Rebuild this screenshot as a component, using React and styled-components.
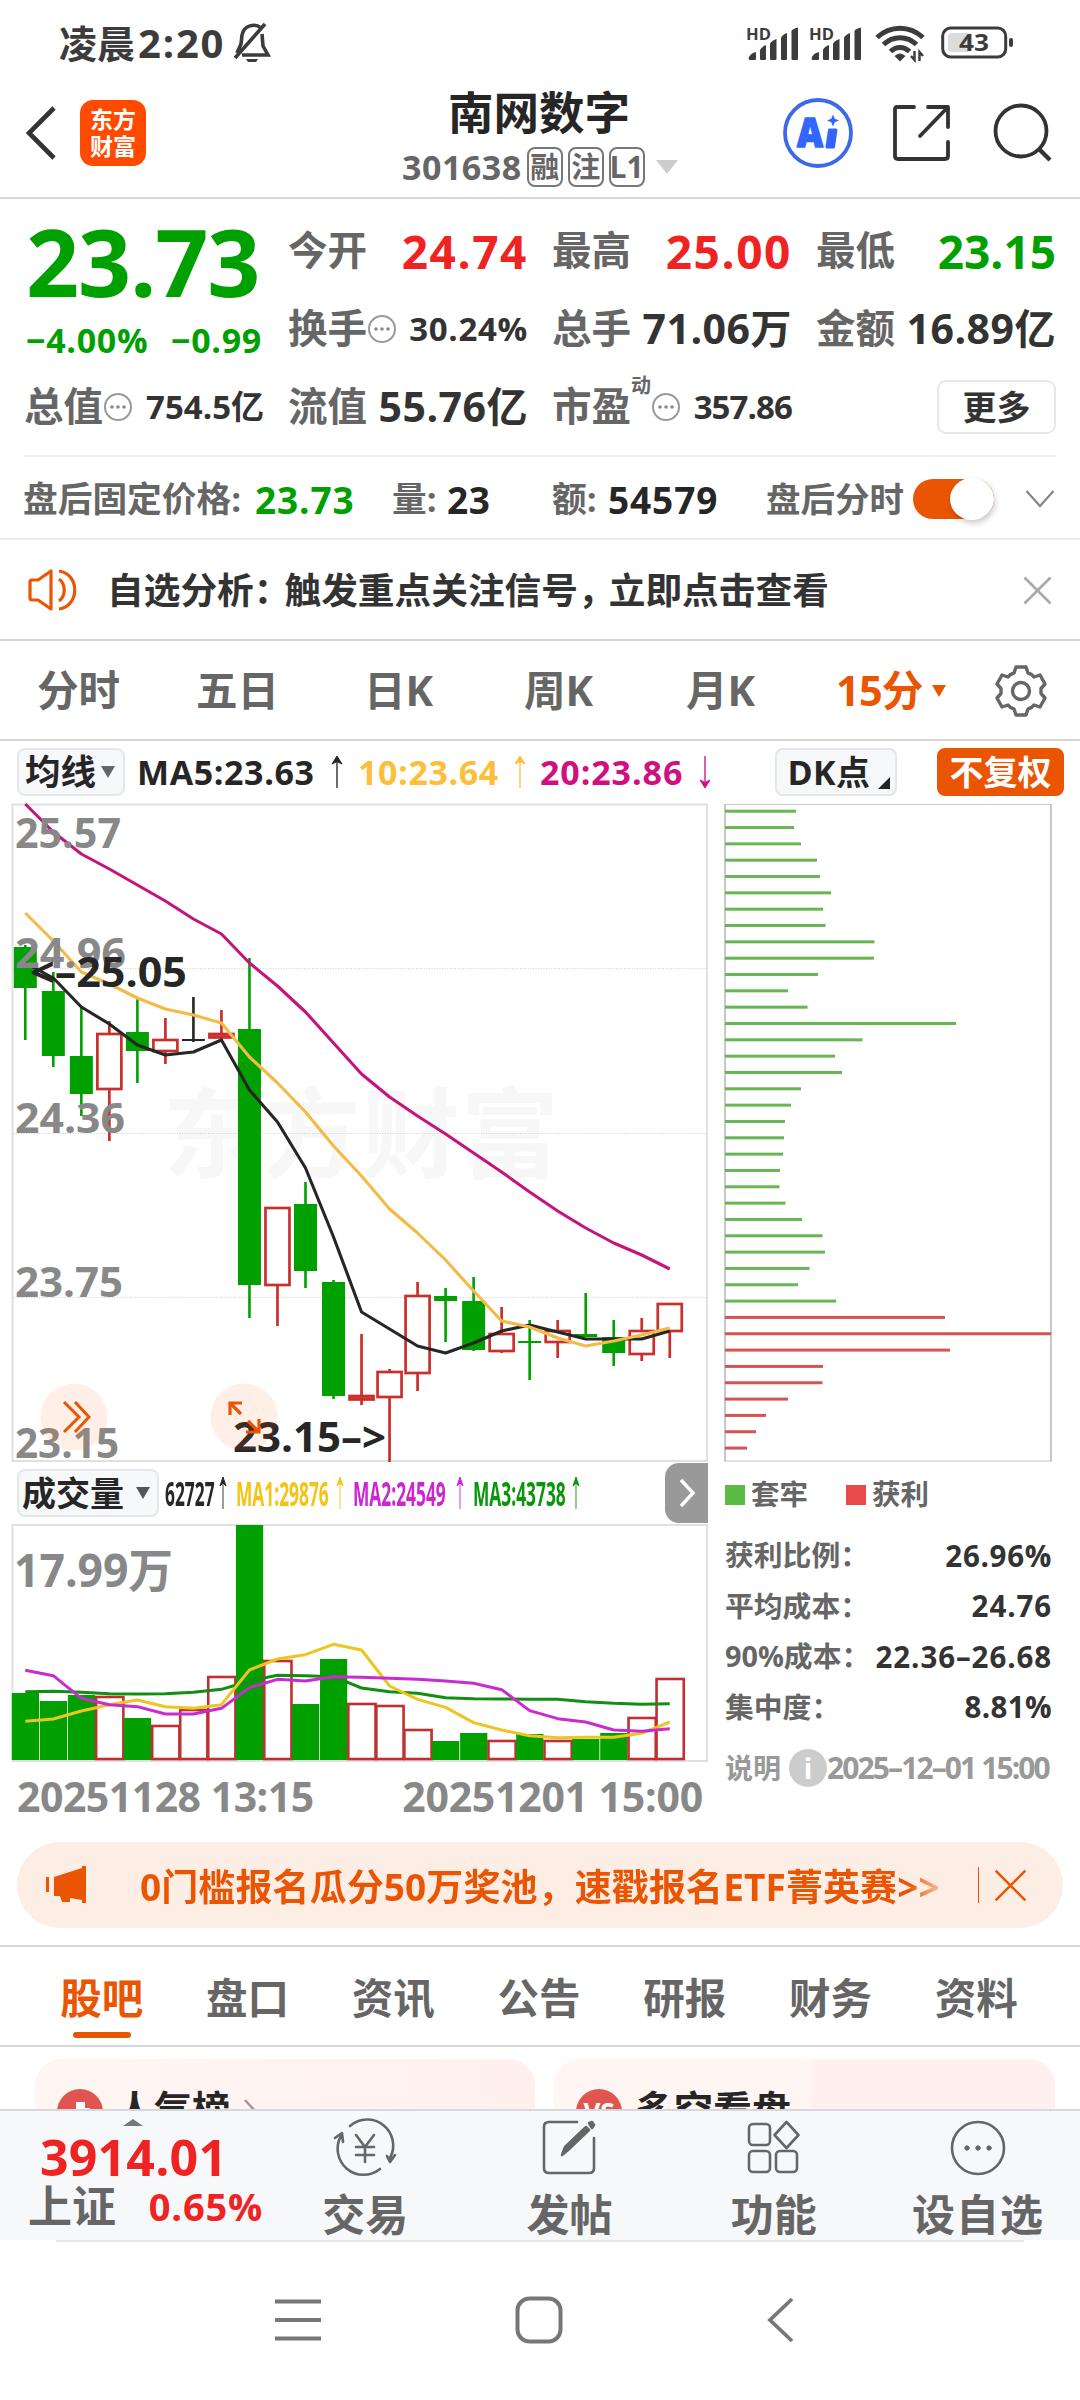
import React from 'react';
import styled, { createGlobalStyle } from 'styled-components';

const ORANGE = '#ea5504';
const GREEN = '#00a000';
const RED = '#f02323';
const FONT = '"Open Sans", "Noto Sans CJK SC", sans-serif';

const GlobalStyle = createGlobalStyle`
  * {
    box-sizing: border-box;
  }
  body {
    margin: 0;
    background: #fff;
    font-family: ${FONT};
    font-weight: 700;
    color: #333;
    -webkit-font-smoothing: antialiased;
  }
  svg {
    display: block;
    flex: none;
    overflow: visible;
  }
`;

const Page = styled.div`
  width: 1080px;
  height: 2400px;
  overflow: hidden;
  display: flex;
  flex-direction: column;
  background: #fff;
`;

const Text = styled.span`
  display: block;
  flex: none;
  white-space: nowrap;
  line-height: 1;
  font-size: ${p => p.$size}px;
  font-weight: ${p => p.$weight || 700};
  color: ${p => p.$color || 'inherit'};
  letter-spacing: ${p => p.$ls || 0}px;
  margin-left: ${p => p.$left || 0}px;
`;

const StatusBar = styled.div`
  height: 86px;
  padding: 0 67px 0 59px;
  display: flex;
  align-items: center;
  color: #3c3c3c;
`;

const Spacer = styled.div`
  flex: 1;
`;

const Header = styled.header`
  height: 113px;
  border-bottom: 2px solid #d8d8d8;
  padding: 0 28px 0 26px;
  display: grid;
  grid-template-columns: 54px 66px 1fr 70px 99px 100px;
  align-items: center;
`;

const Logo = styled.div`
  width: 66px;
  height: 66px;
  margin-bottom: 18px;
  border-radius: 13px;
  background: #ff4a00;
  color: #fff;
  display: flex;
  flex-direction: column;
  align-items: center;
  justify-content: center;
  gap: 4px;
`;

const HeadIcon = styled.div`
  display: flex;
  justify-content: ${p => (p.$start ? 'flex-start' : 'flex-end')};
  margin-bottom: 18px;
`;

const TitleBlock = styled.div`
  height: 113px;
  padding: 1px 0 0 256px;
`;

const TitleName = styled.div`
  height: 52px;
  padding-left: 46px;
  display: flex;
  align-items: center;
`;

const CodeRow = styled.div`
  display: flex;
  align-items: center;
  height: 56px;
  color: #666;
`;

const Tag = styled.span`
  width: 36px;
  height: 40px;
  margin-left: 5px;
  border: 2px solid #777;
  border-radius: 8px;
  display: flex;
  align-items: center;
  justify-content: center;
  font-size: ${p => p.$size || 29}px;
  line-height: 1;
`;

const Triangle = styled.i`
  flex: none;
  width: 0;
  height: 0;
  margin-left: ${p => p.$left || 0}px;
  border-left: ${p => p.$w / 2}px solid transparent;
  border-right: ${p => p.$w / 2}px solid transparent;
  border-top: ${p => p.$h}px solid ${p => p.$color};
`;

const Quotes = styled.section`
  height: 258px;
  margin: 0 24px;
  padding-top: 13px;
  border-bottom: 2px solid #ededed;
  display: grid;
  grid-template-columns: repeat(4, 240px);
  grid-template-rows: repeat(3, 78px);
  column-gap: 24px;
`;

const PriceBox = styled.div`
  grid-row: span 2;
  color: ${GREEN};
  padding: 1px 2px 0;
`;

const BigPrice = styled.div`
  height: 97px;
  display: flex;
  align-items: center;
`;

const Change = styled.div`
  display: flex;
  height: 60px;
  align-items: center;
  justify-content: space-between;
`;

const Cell = styled.div`
  display: flex;
  align-items: center;
  color: #666;
`;

const CellValue = styled(Text)`
  margin-left: auto;
`;

const Sup = styled.sup`
  font-size: 20px;
  line-height: 20px;
  height: 20px;
  margin-top: -42px;
  vertical-align: baseline;
`;

const MoreButton = styled.button`
  width: 119px;
  height: 54px;
  margin: 12px 0 0 auto;
  padding: 0;
  border: 2px solid #e6e8ea;
  border-radius: 9px;
  background: #fff;
  font: 700 34px/1 ${FONT};
  color: #333;
`;

const AfterHours = styled.div`
  height: 83px;
  border-bottom: 2px solid #ececec;
  padding: 4px 0 0 23px;
  display: flex;
  align-items: center;
  color: #666;
`;

const Slot = styled.div`
  width: ${p => p.$w}px;
  flex: none;
  display: flex;
  align-items: center;
`;

const Toggle = styled.div`
  width: 81px;
  height: 40px;
  border-radius: 20px;
  background: ${ORANGE};
  display: flex;
  justify-content: flex-end;
  align-items: center;
`;

const Knob = styled.div`
  width: 44px;
  height: 42px;
  border-radius: 50%;
  background: #fff;
  box-shadow: 1px 3px 6px rgba(0, 0, 0, 0.22);
`;

const Notice = styled.div`
  height: 101px;
  border-bottom: 2px solid #d6d6d6;
  padding: 2px 28px 0;
  display: flex;
  align-items: center;
`;

const Periods = styled.nav`
  height: 100px;
  border-bottom: 2px solid #d6d6d6;
  padding: 2px 0 0 37px;
  display: flex;
  align-items: center;
  color: #666;
`;

const ChartSection = styled.section`
  height: 1097px;
  display: grid;
  grid-template-columns: 712px 368px;
`;

const Column = styled.div`
  min-width: 0;
  display: flex;
  flex-direction: column;
`;

const Bar = styled.div`
  height: ${p => p.$h}px;
  padding: ${p => p.$pad};
  display: flex;
  align-items: center;
  flex: none;
`;

const Chip = styled.div`
  flex: none;
  width: ${p => p.$w}px;
  height: 48px;
  padding-right: ${p => p.$shift || 0}px;
  border: 2px solid ${p => (p.$solid ? ORANGE : '#e4e7eb')};
  border-radius: 8px;
  background: ${p => (p.$solid ? ORANGE : '#f6f8fa')};
  color: ${p => (p.$solid ? '#fff' : '#262626')};
  display: flex;
  align-items: center;
  justify-content: center;
`;

const CornerMark = styled.i`
  align-self: flex-end;
  margin: 0 0 5px 7px;
  border-left: 12px solid transparent;
  border-bottom: 12px solid #262626;
`;

const Narrow = styled.div`
  width: ${p => p.$w}px;
  flex: none;
  span {
    transform: scaleX(${p => p.$scale});
    transform-origin: 0 50%;
  }
`;

const NextButton = styled.div`
  width: 43px;
  height: 60px;
  margin-left: auto;
  border-radius: 14px 0 0 14px;
  background: #999;
  display: flex;
  align-items: center;
  justify-content: center;
`;

const Dates = styled.div`
  display: flex;
  justify-content: space-between;
  padding: 13px 9px 0 17px;
  color: #888;
`;

const Legend = styled.div`
  height: 68px;
  padding: 0 0 4px 13px;
  display: flex;
  align-items: center;
  color: #666;
`;

const Swatch = styled.i`
  width: 20px;
  height: 20px;
  margin-right: 6px;
  background: ${p => p.$color};
`;

const CostRow = styled.div`
  height: 50.4px;
  padding: 0 28px 0 13px;
  display: flex;
  align-items: center;
  justify-content: space-between;
  color: #666;
`;

const CostNote = styled(CostRow)`
  height: 44px;
  margin-top: 14px;
  justify-content: flex-start;
  color: #999;
`;

const InfoDot = styled.div`
  width: 38px;
  height: 38px;
  margin-left: 8px;
  border-radius: 50%;
  background: #ccc;
  color: #fff;
  display: flex;
  align-items: center;
  justify-content: center;
`;

const Banner = styled.div`
  flex: none;
  height: 86px;
  margin: 5px 17px 17px;
  border-radius: 43px;
  background: #fceee5;
  color: ${ORANGE};
  display: flex;
  align-items: center;
  padding: 0 36px 0 28px;
`;

const BannerText = styled(Text)`
  margin-left: 49px;
  background: linear-gradient(90deg, ${ORANGE} 96%, #fbd9c4 101%);
  background-clip: text;
  -webkit-background-clip: text;
  color: transparent;
  padding: 8px 0 6px;
`;

const Divider = styled.i`
  width: 1px;
  height: 36px;
  margin: 0 15px 0 auto;
  background: ${ORANGE};
`;

const Sections = styled.nav`
  flex: none;
  height: 102px;
  border-top: 2px solid #d6d6d6;
  border-bottom: 2px solid #d6d6d6;
  padding: 0 31px 0 29px;
  display: grid;
  grid-template-columns: repeat(7, 1fr);
`;

const SectionTab = styled.div`
  display: flex;
  flex-direction: column;
  align-items: center;
  justify-content: flex-end;
  gap: 13px;
  padding-bottom: 7px;
  color: ${p => (p.$active ? ORANGE : '#666')};
  &::after {
    content: '';
    width: 58px;
    height: 6px;
    border-radius: 3px;
    background: ${p => (p.$active ? ORANGE : 'transparent')};
  }
`;

const Cards = styled.div`
  flex: none;
  height: 62px;
  padding: 12px 25px 0 35px;
  overflow: hidden;
  display: grid;
  grid-template-columns: 500px 501px;
  column-gap: 19px;
`;

const Card = styled.div`
  height: 120px;
  border-radius: 26px;
  background: ${p => p.$bg};
  padding: 30px 0 0 22px;
  display: flex;
  align-items: flex-start;
  color: #262626;
`;

const CardDot = styled.div`
  width: 46px;
  height: 46px;
  margin-right: 13px;
  border-radius: 50%;
  background: #e0554f;
  color: #fff;
  display: flex;
  align-items: center;
  justify-content: center;
`;

const BottomBar = styled.div`
  flex: none;
  height: 131px;
  border-top: 2px solid #d6d8da;
  background: #f7f8fa;
  display: grid;
  grid-template-columns: 263px repeat(4, 204.3px);
  color: #666;
`;

const IndexBox = styled.div`
  padding: 8px 0 0 28px;
`;

const IndexValue = styled.div`
  height: 61px;
  padding-left: 12px;
  display: flex;
  align-items: center;
  color: ${RED};
`;

const IndexRow = styled.div`
  display: flex;
  align-items: center;
  width: 235px;
  height: 38px;
  justify-content: space-between;
`;

const UpMark = styled.i`
  display: block;
  width: 0;
  margin-left: 95px;
  border-left: 10px solid transparent;
  border-right: 10px solid transparent;
  border-bottom: 7px solid #777;
`;

const Action = styled.div`
  display: flex;
  flex-direction: column;
  align-items: center;
  padding-top: 7px;
  gap: 15px;
`;

const SystemNav = styled.div`
  flex: none;
  height: 160px;
  margin: 0 56px;
  border-top: 2px solid #e6e6e6;
  padding: 0 230px 2px 218px;
  display: flex;
  align-items: center;
  justify-content: space-between;
`;

const HomeKey = styled.div`
  margin-right: 10px;
`;

const STEP = 28.02;
const cx = i => 25.3 + i * STEP;

// [kind, high, body top, body bottom, low] in chart pixels
const CANDLES = [
  ['g', 945, 947, 988, 1040], ['g', 972, 991, 1056, 1067], ['g', 1007, 1056, 1094, 1116],
  ['r', 1021, 1034, 1089, 1141], ['g', 999, 1032, 1051, 1083], ['r', 1018, 1040, 1051, 1064],
  ['k', 997, 1039, 1041, 1042], ['r', 1010, 1034, 1037.5, 1040], ['g', 958, 1029, 1285, 1318],
  ['r', 1208, 1208, 1285, 1326], ['g', 1182, 1204, 1271, 1288], ['g', 1280, 1282, 1396, 1399],
  ['r', 1334, 1396, 1399.5, 1405], ['r', 1369, 1372, 1397, 1462], ['r', 1282, 1296, 1373, 1391],
  ['g', 1288, 1296, 1301, 1342], ['g', 1277, 1301, 1350, 1351], ['r', 1307, 1334, 1351, 1353],
  ['g', 1320, 1341, 1343, 1380], ['r', 1320, 1331, 1342, 1358], ['g', 1293, 1334, 1337, 1337],
  ['g', 1320, 1337, 1353, 1366], ['r', 1318, 1331, 1354, 1361], ['r', 1304, 1304, 1331, 1358],
];

const MA5 = [963, 978, 1007, 1024, 1045, 1055, 1052, 1040, 1090, 1122, 1168, 1237, 1312, 1329, 1346, 1353, 1343, 1331, 1325, 1332, 1339, 1339, 1339, 1331];
const MA10 = [913, 941, 972, 984, 998, 1009, 1015, 1023, 1057, 1083, 1112, 1146, 1176, 1209, 1233, 1260, 1291, 1321, 1327, 1338, 1346, 1341, 1335, 1328];
const MA20 = [804, 832, 854, 869, 885, 901, 919, 934, 963, 986, 1012, 1043, 1074, 1097, 1116, 1134, 1153, 1172, 1192, 1211, 1228, 1243, 1255, 1269];

const VOLUMES = [
  ['g', 67], ['g', 59], ['g', 65], ['r', 64], ['g', 42], ['r', 35], ['r', 51], ['r', 84],
  ['g', 235], ['r', 100], ['g', 56], ['g', 101], ['r', 57], ['r', 55], ['r', 31], ['g', 19],
  ['g', 27], ['r', 20], ['g', 26], ['r', 20], ['g', 21], ['g', 27], ['r', 43], ['r', 82],
];
const VMA1 = [814, 807, 783, 764, 750, 770, 775, 764, 660, 627, 614, 583, 600, 708, 748, 772, 818, 840, 857, 863, 862, 862, 850, 816];
const VMA2 = [661, 677, 745, 764, 770, 792, 792, 775, 713, 688, 693, 680, 682, 685, 688, 693, 700, 719, 782, 806, 816, 840, 844, 836];
const VMA3 = [725, 724, 727, 731, 732, 731, 727, 718, 693, 676, 677, 680, 714, 725, 730, 743, 746, 747, 748, 748, 755, 760, 763, 761];

const COSTS = [
  71, 69, 76, 92, 95, 106, 98, 100.5, 149.5, 149, 93, 63, 82.5, 231, 137.5, 110, 117, 76, 66, 60, 59,
  58, 55, 54.5, 60.5, 77, 97.5, 100, 84.5, 73, 111, 220, 326, 225, 98, 97.5, 63, 41, 31, 22,
];

const points = (list, f = v => v) => list.map((v, i) => `${cx(i)},${f(v)}`).join(' ');
const volY = v => 1450 + v / 3;

const AxisText = ({ x, y, w, size = 41, fill = '#888', children }) => (
  <text x={x} y={y} fontSize={size} textLength={w} lengthAdjust="spacingAndGlyphs" fill={fill} fontFamily={FONT} fontWeight="700">
    {children}
  </text>
);

const Candle = ({ i, data: [kind, high, top, bottom, low] }) => {
  const x = cx(i);
  const color = { g: GREEN, r: '#c9302c', k: '#262626' }[kind];
  if (kind === 'r') {
    return (
      <g stroke={color} strokeWidth="2.7" fill={bottom - top < 6 ? '#e04040' : '#fff'}>
        <path d={`M${x} ${high}V${top}M${x} ${bottom}V${low}`} />
        <rect x={x - 12} y={top} width="24" height={bottom - top} />
      </g>
    );
  }
  return (
    <g fill={color}>
      <rect x={x - 1.3} y={high} width="2.6" height={low - high} />
      <rect x={x - 11.5} y={top} width="23" height={bottom - top} />
    </g>
  );
};

const KLine = () => (
  <svg width="712" height="660" viewBox="0 803 712 660">
    <rect x="12.5" y="804.5" width="694.5" height="656.5" fill="none" stroke="#e0e0e0" strokeWidth="2" />
    <text x="163" y="1170" fontSize="98" textLength="396" fontFamily={FONT} fontWeight="700" fill="#f7f7f7">东方财富</text>
    {[968, 1133, 1297].map(y => (
      <line key={y} x1="13" x2="706" y1={y + 0.5} y2={y + 0.5} stroke="#cfcfcf" strokeWidth="1" strokeDasharray="1 1.6" />
    ))}
    {CANDLES.map((c, i) => <Candle key={i} i={i} data={c} />)}
    <g fill="none" strokeWidth="3.1" strokeLinejoin="round">
      <polyline points={points(MA20)} stroke="#c4157f" />
      <polyline points={points(MA5)} stroke="#262626" />
      <polyline points={points(MA10)} stroke="#f3bb45" />
    </g>
    <AxisText x="15" y="848" w="106">25.57</AxisText>
    <AxisText x="15" y="968" w="111">24.96</AxisText>
    <AxisText x="15" y="1133" w="110">24.36</AxisText>
    <AxisText x="15" y="1297" w="108">23.75</AxisText>
    <AxisText x="15" y="1458" w="104">23.15</AxisText>
    <AxisText x="30" y="987" w="157" fill="#262626">&lt;–25.05</AxisText>
    <AxisText x="233" y="1452" w="153" fill="#262626">23.15–&gt;</AxisText>
    <circle cx="74" cy="1417" r="33.5" fill="rgba(255, 110, 40, 0.11)" />
    <circle cx="244" cy="1417" r="33.5" fill="rgba(255, 110, 40, 0.11)" />
    <g fill="none" stroke={ORANGE} strokeWidth="3">
      <path d="M64 1402l15 15-15 15M75 1402l14 15-14 15" />
      <path d="M230 1415v-12h12M230 1403l11 11M259 1419v13h-13M259 1432l-11-11" strokeWidth="3.2" />
    </g>
  </svg>
);

const VolumeChart = () => (
  <svg width="712" height="240" viewBox="0 1523 712 240">
    <rect x="12.5" y="1525" width="694.5" height="236" fill="none" stroke="#e0e0e0" strokeWidth="2" />
    {VOLUMES.map(([kind, h], i) => {
      const x = cx(i) - 13.5;
      return kind === 'g'
        ? <rect key={i} x={x} y={1760 - h} width="27.2" height={h} fill={GREEN} />
        : <rect key={i} x={x + 0.3} y={1761 - h} width="27.2" height={h - 2} fill="#fff" stroke="#c03030" strokeWidth="2.6" />;
    })}
    <g fill="none" strokeWidth="3" strokeLinejoin="round">
      <polyline points={points(VMA3, volY)} stroke="#128f12" />
      <polyline points={points(VMA1, volY)} stroke="#ecc520" />
      <polyline points={points(VMA2, volY)} stroke="#c92bd0" />
    </g>
    <AxisText x="14" y="1587" w="159" size="46">17.99万</AxisText>
  </svg>
);

const CostChart = () => (
  <svg width="368" height="660" viewBox="712 803 368 660">
    <path d="M725 804.5H1051M725 1461H1051" stroke="#c8c8c8" strokeWidth="1" />
    <path d="M725 804V1461.5M1051 804V1461.5" stroke="#c8c8c8" strokeWidth="2" />
    {COSTS.map((w, i) => (
      <rect key={i} x="725" y={809.7 + i * 16.33} width={w} height="3" fill={i > 30 ? '#d45454' : '#68b653'} />
    ))}
  </svg>
);

const ArrowBox = styled.div`
  margin-left: ${p => p.$left || 0}px;
  transform: ${p => (p.$down ? 'rotate(180deg)' : 'none')};
`;

const TrendArrow = ({ color, down, left, thin }) => (
  <ArrowBox $left={left} $down={down}>
    <svg width="14" height="34" viewBox="0 0 14 34" fill="none" stroke={color}>
      <path d="M7 4v29" strokeWidth={thin ? 1.2 : 1.8} opacity="0.75" />
      <path d={thin ? 'M7 1L4 10l3-3 3 3z' : 'M7 1L2 9l5-2.500L12 9z'} strokeWidth="1" fill={color} />
    </svg>
  </ArrowBox>
);

const Dots = () => (
  <svg width="30" height="30" viewBox="0 0 30 30">
    <circle cx="15" cy="15" r="13" fill="none" stroke="#999" strokeWidth="2" />
    <g fill="#888"><circle cx="9" cy="15" r="1.8" /><circle cx="15" cy="15" r="1.8" /><circle cx="21" cy="15" r="1.8" /></g>
  </svg>
);

const Cross = ({ size, color, width = 2.8 }) => (
  <svg width={size} height={size} viewBox="0 0 30 30" fill="none" stroke={color} strokeWidth={width}>
    <path d="M1.500 1.500L28.500 28.500M28.500 1.500L1.500 28.500" />
  </svg>
);

const StatusIcon = styled.div`
  margin-left: ${p => p.$left}px;
`;

const Signal = () => (
  <svg width="52" height="36" viewBox="0 0 52 36" fill="#3c3c3c">
    <text x="-1" y="15" fontSize="16.500" fontFamily={FONT} fontWeight="700" textLength="25" lengthAdjust="spacingAndGlyphs">HD</text>
    <path d="M2 32Q4 28 9 27V34Q9 35 8 35H3Q1 35 2 32ZM13 25Q14 22 19 20V34Q19 35 18 35H14Q13 35 13 34ZM23 19Q24 16 29.500 14V34Q29.500 35 28.500 35H24Q23 35 23 34ZM34 13Q35 10 40 8V34Q40 35 39 35H35Q34 35 34 34ZM44.500 6Q45 4 51 2.500V34Q51 35 50 35H45.500Q44.500 35 44.500 34Z" />
  </svg>
);

const Status = () => (
  <StatusBar>
    <Text $size={38}>凌晨</Text>
    <Text $size={40} $left={3} $ls={1.8}>2:20</Text>
    <StatusIcon $left={7}>
      <svg width="38" height="42" viewBox="0 0 38 42" fill="none" stroke="#3c3c3c" strokeWidth="3.600">
        <path d="M29 6C23 1 12 3 10 13L9 22L5 31M30 12L31 24L36 33H10M3 36L33 2" />
        <path d="M14 37h12l-2 3h-8z" fill="#3c3c3c" stroke="none" />
      </svg>
    </StatusIcon>
    <Spacer />
    <Signal />
    <StatusIcon $left={11}><Signal /></StatusIcon>
    <StatusIcon $left={12}>
      <svg width="54" height="38" viewBox="0 0 54 38" fill="none" stroke="#3c3c3c" strokeWidth="5">
        <path d="M3 13.500C16 1 36 1 49 13.500M9.500 20.500C19 11.500 33 11.500 42.500 20.500M16.500 27.500C22 22 30 22 35.500 27.500" />
        <path d="M20.500 32Q26 27 31.500 32L26 37.500Z" fill="#3c3c3c" stroke="none" />
        <path d="M40.500 27v9l-3.500-4M45.500 37V28l3.500 4" strokeWidth="2.400" />
      </svg>
    </StatusIcon>
    <StatusIcon $left={13}>
      <svg width="72" height="34" viewBox="0 0 72 34">
        <rect x="1.700" y="2" width="63" height="29" rx="8" fill="none" stroke="#3c3c3c" strokeWidth="3" />
        <rect x="7" y="7" width="23" height="19" rx="4" fill="#dcdcdc" />
        <rect x="68" y="12" width="4" height="9" rx="2" fill="#3c3c3c" />
        <text x="18" y="25" fontSize="24" fontFamily={FONT} fontWeight="700" textLength="30" lengthAdjust="spacingAndGlyphs" fill="#3c3c3c">43</text>
      </svg>
    </StatusIcon>
  </StatusBar>
);

const TopHeader = () => (
  <Header>
    <HeadIcon $start>
      <svg width="30" height="54" viewBox="0 0 30 54" fill="none" stroke="#333" strokeWidth="4.600">
        <path d="M28 2L3 27L28 52" />
      </svg>
    </HeadIcon>
    <Logo>
      <Text $size={23}>东方</Text>
      <Text $size={23}>财富</Text>
    </Logo>
    <TitleBlock>
      <TitleName><Text $size={45.5} $color="#262626">南网数字</Text></TitleName>
      <CodeRow>
        <Text $size={34} $ls={0.5}>301638</Text>
        <Tag>融</Tag>
        <Tag>注</Tag>
        <Tag $size={30}>L1</Tag>
        <Triangle $left={11} $w={22} $h={14} $color="#ccc" />
      </CodeRow>
    </TitleBlock>
    <HeadIcon>
      <svg width="70" height="70" viewBox="0 0 70 70">
        <circle cx="35" cy="35" r="33" fill="none" stroke="#3c68ea" strokeWidth="3.800" />
        <text x="14" y="49" fontSize="40" fontFamily={FONT} fontWeight="800" fill="#3366ff" stroke="#3366ff" strokeWidth="1.500" strokeLinejoin="round" textLength="26" lengthAdjust="spacingAndGlyphs">A</text>
        <path d="M46.500 32H53L50.500 49H44Z" fill="#3366ff" stroke="#3366ff" strokeWidth="3" strokeLinejoin="round" />
        <path d="M50 16.500l1.800 4.200 4.200 1.800-4.200 1.800-1.800 4.200-1.800-4.200-4.200-1.800 4.200-1.800z" fill="#3366ff" />
      </svg>
    </HeadIcon>
    <HeadIcon>
      <svg width="60" height="60" viewBox="0 0 60 60" fill="none" stroke="#333" strokeWidth="3.800" strokeLinejoin="round" strokeLinecap="round">
        <path d="M22 4H5Q3 4 3 6V53Q3 56 6 56H53Q56 56 56 53V39" />
        <path d="M36 4H56V24M56 4L28 33" />
      </svg>
    </HeadIcon>
    <HeadIcon>
      <svg width="60" height="60" viewBox="0 0 60 60" fill="none" stroke="#333" strokeWidth="3.800">
        <circle cx="29" cy="28" r="25.500" />
        <path d="M46.500 45.500L58 57" strokeWidth="4.400" />
      </svg>
    </HeadIcon>
  </Header>
);

const QuoteCell = ({ label, value, size, color = '#333', ls = 0, dots, sup }) => (
  <Cell>
    <Text $size={39.5}>{label}</Text>
    {sup && <Sup>{sup}</Sup>}
    {dots && <Dots />}
    <CellValue $size={size} $color={color} $ls={ls}>{value}</CellValue>
  </Cell>
);

const QuotePanel = () => (
  <Quotes>
    <PriceBox>
      <BigPrice><Text $size={93} $ls={-1.2}>23.73</Text></BigPrice>
      <Change>
        <Text $size={34} $ls={0.7}>−4.00%</Text>
        <Text $size={34} $ls={0.7}>−0.99</Text>
      </Change>
    </PriceBox>
    <QuoteCell label="今开" value="24.74" size={46} color={RED} ls={1.6} />
    <QuoteCell label="最高" value="25.00" size={46} color={RED} ls={1.6} />
    <QuoteCell label="最低" value="23.15" size={46} color={GREEN} />
    <QuoteCell label="换手" value="30.24%" size={33} dots ls={0.7} />
    <QuoteCell label="总手" value="71.06万" size={41} ls={0.5} />
    <QuoteCell label="金额" value="16.89亿" size={41} ls={0.5} />
    <QuoteCell label="总值" value="754.5亿" size={33} dots />
    <QuoteCell label="流值" value="55.76亿" size={41} ls={0.5} />
    <QuoteCell label="市盈" value="357.86" size={33} dots sup="动" ls={-0.9} />
    <MoreButton>更多</MoreButton>
  </Quotes>
);

const Chevron = styled.div`
  margin-left: 31px;
`;

const AfterHoursRow = () => (
  <AfterHours>
    <Slot $w={232}><Text $size={34.7}>盘后固定价格:</Text></Slot>
    <Slot $w={137}><Text $size={37} $color={GREEN} $ls={0.9}>23.73</Text></Slot>
    <Slot $w={55}><Text $size={34.7}>量:</Text></Slot>
    <Slot $w={105}><Text $size={37} $color="#262626" $ls={0.6}>23</Text></Slot>
    <Slot $w={56}><Text $size={34.7}>额:</Text></Slot>
    <Slot $w={158}><Text $size={37} $color="#262626" $ls={0.9}>54579</Text></Slot>
    <Slot $w={147}><Text $size={34.5}>盘后分时</Text></Slot>
    <Toggle><Knob /></Toggle>
    <Chevron>
      <svg width="30" height="18" viewBox="0 0 30 18" fill="none" stroke="#888" strokeWidth="2.200">
        <path d="M1.500 1L15 16L28.500 1" />
      </svg>
    </Chevron>
  </AfterHours>
);

const NoticeRow = () => (
  <Notice>
    <svg width="50" height="44" viewBox="0 0 50 44" fill="none" stroke={ORANGE} strokeWidth="3.200" strokeLinejoin="round">
      <path d="M10 12L23 3V41L10 32H4Q2 32 2 30V14Q2 12 4 12Z" />
      <path d="M31 11C38 16 38 28 31 33M31 3C52 6 52 38 31 41" />
    </svg>
    <Text $size={36.7} $left={29}>自选分析</Text>
    <Text $size={36.7} $ls={-6}>：</Text>
    <Text $size={36.7}>触发重点关注信号</Text>
    <Text $size={36.7} $ls={-6}>，</Text>
    <Text $size={36.7}>立即点击查看</Text>
    <Spacer />
    <Cross size={29} color="#aaa" />
  </Notice>
);

const PeriodTabs = () => (
  <Periods>
    <Slot $w={159}><Text $size={41.5}>分时</Text></Slot>
    <Slot $w={168}><Text $size={41.5}>五日</Text></Slot>
    <Slot $w={160}><Text $size={41.5}>日K</Text></Slot>
    <Slot $w={162}><Text $size={41.5}>周K</Text></Slot>
    <Slot $w={150}><Text $size={41.5}>月K</Text></Slot>
    <Slot $w={157}>
      <Text $size={41.5} $color={ORANGE} $ls={-0.8}>15分</Text>
      <Triangle $left={9} $w={14} $h={12} $color={ORANGE} />
    </Slot>
    <svg width="56" height="56" viewBox="0 0 56 56" fill="none" stroke="#666" strokeWidth="3.400" strokeLinejoin="round">
      <path d="M23 4H33L35 10Q39 11 41 14L47 12L52 21L48 25.500V30.500L52 35L47 44L41 42Q39 45 35 46L33 52H23L21 46Q17 45 15 42L9 44L4 35L8 30.500V25.500L4 21L9 12L15 14Q17 11 21 10Z" />
      <circle cx="28" cy="28" r="8.500" />
    </svg>
  </Periods>
);

const Squeezed = ({ w, color, arrow, children }) => (
  <>
    <Narrow $w={w} $scale={0.51}><Text $size={34} $color={color}>{children}</Text></Narrow>
    <TrendArrow color={color} thin left={arrow} />
  </>
);

const Charts = () => (
  <ChartSection>
    <Column>
      <Bar $h={62} $pad="1px 0 0 17px">
        <Chip $w={108} $shift={2}>
          <Text $size={35.5}>均线</Text>
          <Triangle $left={5} $w={14} $h={12} $color="#666" />
        </Chip>
        <Slot $w={190}><Text $size={34} $left={12} $color="#262626" $ls={0.6}>MA5:23.63</Text></Slot>
        <TrendArrow color="#262626" left={15} />
        <Slot $w={158}><Text $size={34} $left={14} $color="#fbbf3c" $ls={0.6}>10:23.64</Text></Slot>
        <TrendArrow color="#fbbf3c" left={11} />
        <Slot $w={160}><Text $size={34} $left={13} $color="#d0107f" $ls={0.9}>20:23.86</Text></Slot>
        <TrendArrow color="#d0107f" left={11} down />
      </Bar>
      <KLine />
      <Bar $h={60} $pad="0 4px 0 17px">
        <Chip $w={142} $shift={4}>
          <Text $size={34}>成交量</Text>
          <Triangle $left={12} $w={14} $h={12} $color="#555" />
        </Chip>
        <Slot $w={6} />
        <Squeezed w={50} color="#262626" arrow={1}>62727</Squeezed>
        <Slot $w={6} />
        <Squeezed w={96} color="#f3c417" arrow={1}>MA1:29876</Squeezed>
        <Slot $w={6} />
        <Squeezed w={99} color="#cc25d2" arrow={1}>MA2:24549</Squeezed>
        <Slot $w={6} />
        <Squeezed w={96} color="#0a960a" arrow={0}>MA3:43738</Squeezed>
        <NextButton>
          <svg width="18" height="30" viewBox="0 0 18 30" fill="none" stroke="#fff" strokeWidth="3.400"><path d="M3 2L15 15L3 28" /></svg>
        </NextButton>
      </Bar>
      <VolumeChart />
      <Dates>
        <Text $size={41} $ls={-0.5}>20251128 13:15</Text>
        <Text $size={41} $ls={-0.2}>20251201 15:00</Text>
      </Dates>
    </Column>
    <Column>
      <Bar $h={62} $pad="1px 16px 0 63px">
        <Chip $w={122}>
          <Text $size={34} $left={5} $ls={0.5}>DK点</Text>
          <CornerMark />
        </Chip>
        <Spacer />
        <Chip $w={127} $solid><Text $size={34}>不复权</Text></Chip>
      </Bar>
      <CostChart />
      <Legend>
        <Swatch $color="#5cba47" />
        <Slot $w={95}><Text $size={28.5}>套牢</Text></Slot>
        <Swatch $color="#e84a4a" />
        <Text $size={28.5}>获利</Text>
      </Legend>
      <CostRow><Text $size={28.8}>获利比例：</Text><Text $size={29.5} $color="#333" $ls={0.7}>26.96%</Text></CostRow>
      <CostRow><Text $size={28.8}>平均成本：</Text><Text $size={29.5} $color="#333" $ls={0.9}>24.76</Text></CostRow>
      <CostRow><Text $size={28.8}>90%成本：</Text><Text $size={29.5} $color="#333" $ls={0.9}>22.36–26.68</Text></CostRow>
      <CostRow><Text $size={28.8}>集中度：</Text><Text $size={29.5} $color="#333" $ls={0.4}>8.81%</Text></CostRow>
      <CostNote>
        <Text $size={28}>说明</Text>
        <InfoDot><Text $size={28}>i</Text></InfoDot>
        <Text $size={30} $ls={-1.9}>2025–12–01 15:00</Text>
      </CostNote>
    </Column>
  </ChartSection>
);

const Promo = () => (
  <Banner>
    <svg width="46" height="40" viewBox="0 0 46 40" fill={ORANGE}>
      <path d="M1 12h3v15H1zM9 12L37 3V1h4v37h-4v-3l-12-2v4h-8l-2-6H9z" />
    </svg>
    <BannerText $size={37} $ls={0.1}>0门槛报名瓜分50万奖池，速戳报名ETF菁英赛&gt;&gt;</BannerText>
    <Divider />
    <Cross size={33} color={ORANGE} width={2.4} />
  </Banner>
);

const SECTIONS = ['股吧', '盘口', '资讯', '公告', '研报', '财务', '资料'];

const SectionTabs = () => (
  <Sections>
    {SECTIONS.map((name, i) => (
      <SectionTab key={name} $active={i === 0}><Text $size={41.5}>{name}</Text></SectionTab>
    ))}
  </Sections>
);

const CardArrow = styled.div`
  margin: 10px 0 0 14px;
`;

const CardRow = () => (
  <Cards>
    <Card $bg="linear-gradient(90deg, #fff6f4, #fff0ee)">
      <CardDot>
        <svg width="26" height="26" viewBox="0 0 26 26" fill="#fff"><path d="M3 12h6v14H3zM9 3h9v23H9zM18 9h5v17h-5z" /></svg>
      </CardDot>
      <Text $size={38}>人气榜</Text>
      <CardArrow>
        <svg width="14" height="26" viewBox="0 0 14 26" fill="none" stroke="#999" strokeWidth="2.400">
          <path d="M1 1L12 13L1 25" />
        </svg>
      </CardArrow>
    </Card>
    <Card $bg="linear-gradient(90deg, #fff6f4 51%, #fff0ef 52%)">
      <CardDot><Text $size={26}>VS</Text></CardDot>
      <Text $size={39}>多空看盘</Text>
    </Card>
  </Cards>
);

const ActionIcon = ({ children }) => (
  <svg width="62" height="60" viewBox="0 0 62 60" fill="none" stroke="#666" strokeWidth="2.600" strokeLinejoin="round" strokeLinecap="round">
    {children}
  </svg>
);

const Bottom = () => (
  <BottomBar>
    <IndexBox>
      <UpMark />
      <IndexValue><Text $size={50} $ls={0.2}>3914.01</Text></IndexValue>
      <IndexRow>
        <Text $size={44}>上证</Text>
        <Text $size={38} $color={RED} $ls={0.8}>0.65%</Text>
      </IndexRow>
    </IndexBox>
    <Action>
      <ActionIcon>
        <path d="M16 8A26 26 0 0 1 56 40M46 51A26 26 0 0 1 7 18M1 20L8 15L9 24M61 37L56 44L53 38" />
        <path d="M22 17L31 29L40 17M31 29V44M22 29H40M22 37H40" />
      </ActionIcon>
      <Text $size={43}>交易</Text>
    </Action>
    <Action>
      <ActionIcon>
        <path d="M39 4H11Q6 4 6 9V50Q6 55 11 55H51Q56 55 56 50V20" />
        <path d="M24 37L27 29L48 9L51 12L29 33ZM51 5L54 4L56 7L54 10Z" fill="#666" />
      </ActionIcon>
      <Text $size={43}>发帖</Text>
    </Action>
    <Action>
      <ActionIcon>
        <rect x="6" y="6" width="21" height="21" rx="4" />
        <rect x="6" y="33" width="21" height="21" rx="4" />
        <rect x="33" y="33" width="21" height="21" rx="4" />
        <path d="M43.500 4L55.500 17L43.500 30L31.500 17Z" />
      </ActionIcon>
      <Text $size={43}>功能</Text>
    </Action>
    <Action>
      <ActionIcon>
        <circle cx="31" cy="30" r="26" />
        <g fill="#666" strokeWidth="1"><circle cx="20" cy="30" r="2.200" /><circle cx="31" cy="30" r="2.200" /><circle cx="42" cy="30" r="2.200" /></g>
      </ActionIcon>
      <Text $size={43} $ls={1}>设自选</Text>
    </Action>
  </BottomBar>
);

const Navigation = () => (
  <SystemNav>
    <svg width="48" height="44" viewBox="0 0 48 44" stroke="#777" strokeWidth="4"><path d="M1 3.500H47M1 22H47M1 40.500H47" /></svg>
    <HomeKey>
      <svg width="50" height="50" viewBox="0 0 50 50" fill="none" stroke="#777" strokeWidth="4"><rect x="3.500" y="3.500" width="43" height="43" rx="12" /></svg>
    </HomeKey>
    <svg width="28" height="46" viewBox="0 0 28 46" fill="none" stroke="#777" strokeWidth="3.800"><path d="M26 2L4 23L26 44" /></svg>
  </SystemNav>
);

const App = () => (
  <Page>
    <GlobalStyle />
    <Status />
    <TopHeader />
    <QuotePanel />
    <AfterHoursRow />
    <NoticeRow />
    <PeriodTabs />
    <Charts />
    <Promo />
    <SectionTabs />
    <CardRow />
    <Bottom />
    <Navigation />
  </Page>
);

export default App;
